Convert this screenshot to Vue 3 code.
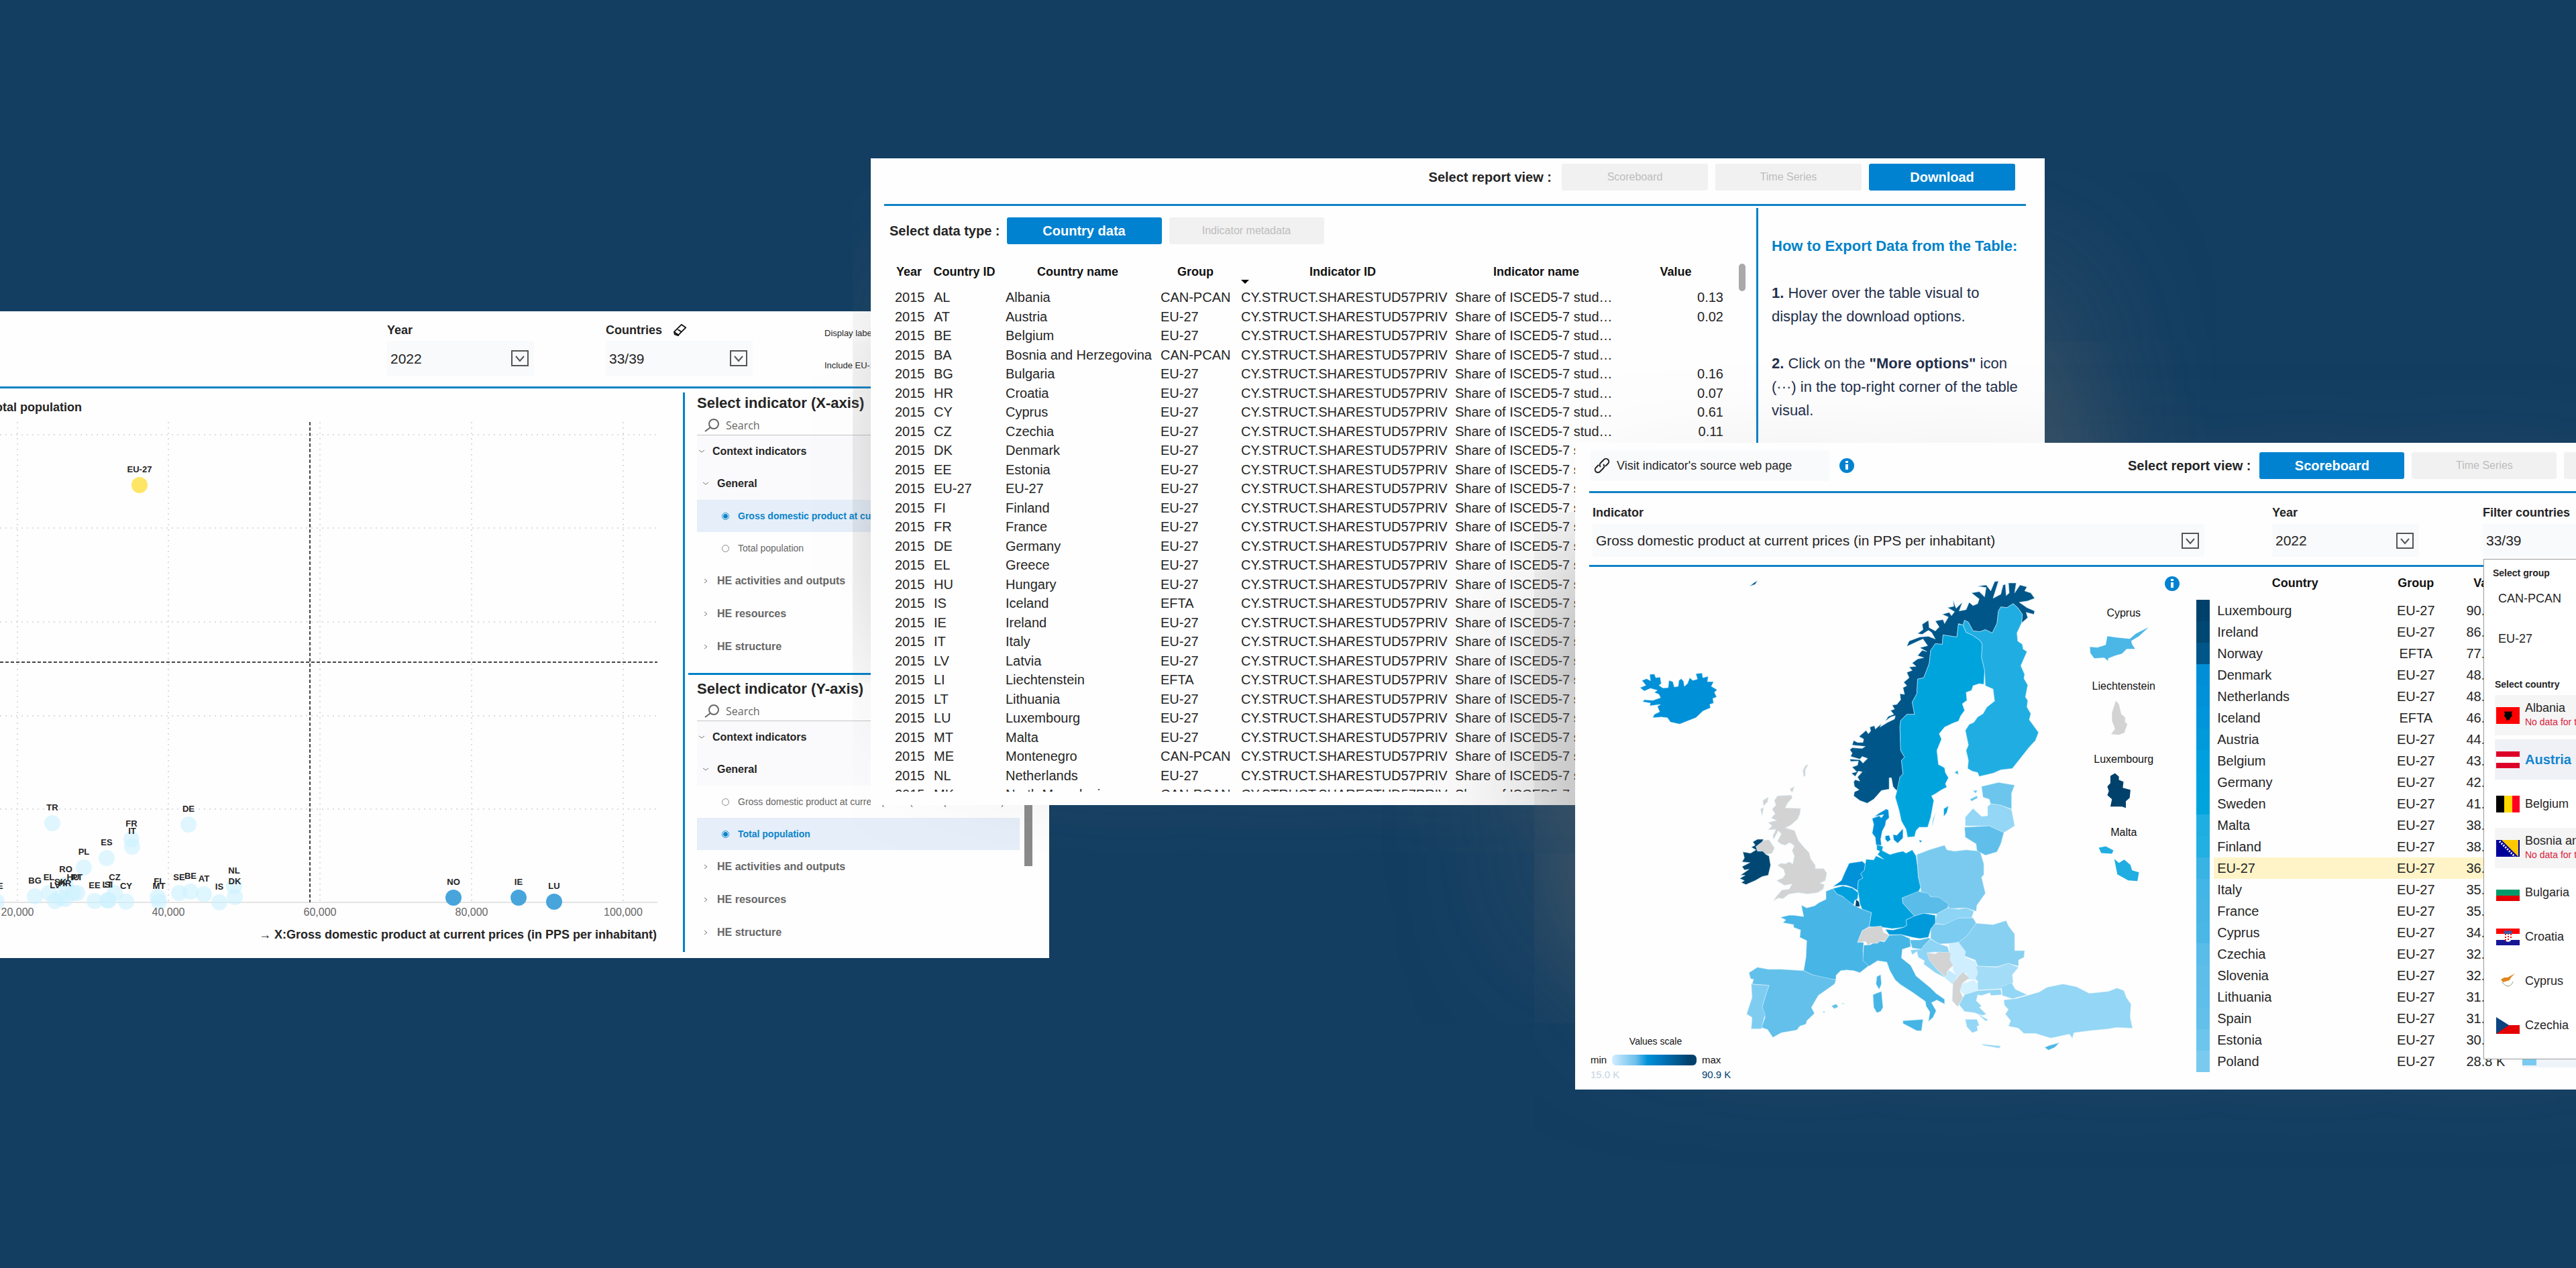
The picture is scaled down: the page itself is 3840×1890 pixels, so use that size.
<script setup>
const stud = 'CY.STRUCT.SHARESTUD57PRIV'
const countryData = [
  ['AL', 'Albania', 'CAN-PCAN', '0.13'],
  ['AT', 'Austria', 'EU-27', '0.02'],
  ['BE', 'Belgium', 'EU-27', ''],
  ['BA', 'Bosnia and Herzegovina', 'CAN-PCAN', ''],
  ['BG', 'Bulgaria', 'EU-27', '0.16'],
  ['HR', 'Croatia', 'EU-27', '0.07'],
  ['CY', 'Cyprus', 'EU-27', '0.61'],
  ['CZ', 'Czechia', 'EU-27', '0.11'],
  ['DK', 'Denmark', 'EU-27', ''],
  ['EE', 'Estonia', 'EU-27', ''],
  ['EU-27', 'EU-27', 'EU-27', ''],
  ['FI', 'Finland', 'EU-27', ''],
  ['FR', 'France', 'EU-27', ''],
  ['DE', 'Germany', 'EU-27', ''],
  ['EL', 'Greece', 'EU-27', ''],
  ['HU', 'Hungary', 'EU-27', ''],
  ['IS', 'Iceland', 'EFTA', ''],
  ['IE', 'Ireland', 'EU-27', ''],
  ['IT', 'Italy', 'EU-27', ''],
  ['LV', 'Latvia', 'EU-27', ''],
  ['LI', 'Liechtenstein', 'EFTA', ''],
  ['LT', 'Lithuania', 'EU-27', ''],
  ['LU', 'Luxembourg', 'EU-27', ''],
  ['MT', 'Malta', 'EU-27', ''],
  ['ME', 'Montenegro', 'CAN-PCAN', ''],
  ['NL', 'Netherlands', 'EU-27', ''],
  ['MK', 'North Macedonia', 'CAN-PCAN', ''],
]

const ranking = [
  ['Luxembourg', 'EU-27', 90.9, '#00416b'],
  ['Ireland', 'EU-27', 86.1, '#004873'],
  ['Norway', 'EFTA', 77.5, '#005689'],
  ['Denmark', 'EU-27', 48.6, '#008fd7'],
  ['Netherlands', 'EU-27', 48.4, '#0091d8'],
  ['Iceland', 'EFTA', 46.4, '#0095da'],
  ['Austria', 'EU-27', 44.4, '#009adb'],
  ['Belgium', 'EU-27', 43.1, '#009fdd'],
  ['Germany', 'EU-27', 42.3, '#00a2dd'],
  ['Sweden', 'EU-27', 41.5, '#00a4dd'],
  ['Malta', 'EU-27', 38.6, '#1faee2'],
  ['Finland', 'EU-27', 38.4, '#22afe2'],
  ['EU-27', 'EU-27', 36.0, '#39b2e4'],
  ['Italy', 'EU-27', 35.6, '#43b5e6'],
  ['France', 'EU-27', 35.5, '#47b5e6'],
  ['Cyprus', 'EU-27', 34.4, '#4bb7e7'],
  ['Czechia', 'EU-27', 32.7, '#5abce9'],
  ['Slovenia', 'EU-27', 32.1, '#5ebee9'],
  ['Lithuania', 'EU-27', 31.9, '#60bfea'],
  ['Spain', 'EU-27', 31.1, '#63c0ea'],
  ['Estonia', 'EU-27', 30.2, '#6cc5ec'],
  ['Poland', 'EU-27', 28.8, '#7acaef'],
]

const flagItems = [
  { name: 'Albania', key: 'al', noData: true },
  { name: 'Austria', key: 'at', active: true },
  { name: 'Belgium', key: 'be' },
  { name: 'Bosnia and Herzegovina', key: 'ba', noData: true },
  { name: 'Bulgaria', key: 'bg' },
  { name: 'Croatia', key: 'hr' },
  { name: 'Cyprus', key: 'cy' },
  { name: 'Czechia', key: 'cz' },
]

const bubbles = [
  ['TR', 78, 1227], ['DE', 281, 1229], ['FR', 196, 1251], ['IT', 197, 1262],
  ['ES', 159, 1279], ['PL', 125, 1293], ['RO', 98, 1319], ['EL', 73, 1331],
  ['BG', 52, 1336], ['LV', 82, 1343], ['SK', 90, 1338], ['HR', 97, 1340],
  ['HU', 109, 1331], ['PT', 115, 1331], ['EE', 141, 1343], ['LT', 160, 1342],
  ['SI', 162, 1342], ['CZ', 171, 1331], ['CY', 188, 1344], ['FI', 235, 1337],
  ['MT', 237, 1344], ['SE', 267, 1331], ['BE', 284, 1329], ['AT', 304, 1333],
  ['IS', 327, 1345], ['NL', 349, 1321], ['DK', 350, 1337], ['ME', -5, 1344],
  ['NO', 676, 1338, '#48a5dc'], ['IE', 773, 1338, '#48a5dc'], ['LU', 826, 1344, '#48a5dc'],
  ['EU-27', 208, 723, '#ffe566'],
]
const xTicks = [[26, '20,000'], [251, '40,000'], [477, '60,000'], [703, '80,000'], [929, '100,000']]
const yTicks = [648, 787, 927, 1067, 1206]

const axes = [
  { id: 'x', title: 'Select indicator (X-axis)', picked: 0 },
  { id: 'y', title: 'Select indicator (Y-axis)', picked: 1 },
]
const options = ['Gross domestic product at current prices (in PPS per inhabitant)', 'Total population']
const closedGroups = ['HE activities and outputs', 'HE resources', 'HE structure']

const countries = [
  ['#0090d8', 'M113 352 128 345 118 330 130 325 140 331 138 312 150 311 154 322 165 320 168 340 162 345 172 353 186 352 188 330 198 334 202 350 212 348 214 330 220 325 226 333 228 348 236 340 242 322 250 330 262 326 258 310 274 308 276 322 290 318 288 334 304 334 298 348 313 358 306 366 312 380 302 384 304 398 294 402 296 412 276 422 258 442 240 450 216 461 192 455 184 442 168 440 146 442 150 432 164 424 158 408 166 402 138 406 140 398 120 394 124 388 146 390 166 382 162 372 150 366 158 360 140 354 124 362Z'],
  ['#005689', 'M703 698 684 690 668 676 670 664 682 658 670 648 668 634 672 628 684 632 678 620 690 604 680 602 672 618 662 608 676 604 664 590 678 584 680 572 660 573 658 566 684 568 692 578 704 564 690 558 684 566 660 558 664 548 658 538 664 532 690 534 698 528 680 526 664 524 668 510 678 516 692 516 694 506 682 498 700 480 706 490 712 482 710 470 722 466 724 476 740 460 736 470 756 456 774 446 776 436 764 440 750 452 758 438 772 432 764 420 774 416 768 404 780 402 790 388 788 370 800 372 796 352 806 346 798 336 812 322 806 306 820 300 812 290 830 288 820 278 834 266 850 262 834 256 846 240 858 244 840 232 860 226 848 206 832 214 806 228 812 212 840 200 862 198 880 206 870 186 862 180 846 192 834 190 848 178 846 162 862 150 864 172 880 182 890 170 880 152 900 148 904 160 914 140 898 132 916 126 922 136 930 124 912 112 928 108 926 90 934 114 950 96 942 122 960 118 968 96 978 106 990 100 994 86 974 68 994 64 1008 80 1012 52 990 48 1012 44 1024 62 1034 34 1044 32 1030 84 1050 72 1056 44 1062 42 1064 76 1072 68 1070 38 1090 38 1086 68 1100 44 1118 50 1112 62 1128 68 1138 84 1120 92 1098 96 1118 112 1138 122 1136 132 1116 126 1120 142 1104 158 1106 132 1094 112 1082 100 1066 112 1050 110 1044 122 1040 160 1028 188 1010 178 996 184 978 182 966 156 956 150 952 164 940 160 936 200 900 194 898 222 880 220 868 240 864 280 850 322 834 326 832 370 820 395 826 432 806 432 790 450 788 470 790 540 800 560 792 570 796 610 788 620 782 662 776 656 770 648 766 622 760 622 760 656 740 660 720 686ZM398 48 408 38 418 31 412 42 402 46Z'],
  ['#00a4dd', 'M940 162 952 164 960 186 976 194 996 210 1002 222 1000 260 1008 300 1006 342 994 340 978 346 974 360 960 366 962 390 950 400 956 420 946 436 940 452 926 458 904 470 890 490 896 506 884 540 888 582 904 592 906 606 914 622 906 640 910 650 896 658 880 670 870 676 876 690 868 740 860 770 838 770 830 780 826 798 808 800 804 776 792 752 786 720 776 680 780 662 788 620 796 610 792 570 800 560 790 540 788 470 790 450 806 432 826 432 820 395 832 370 834 326 850 322 864 280 868 240 880 220 898 222 900 194 936 200ZM902 715 914 706 910 726 902 738ZM880 728 872 766 874 748Z'],
  ['#20aee2', 'M952 164 956 150 966 156 978 182 996 184 1010 178 1028 188 1040 160 1044 122 1050 110 1066 112 1082 100 1094 112 1106 132 1104 158 1092 188 1094 212 1106 222 1108 236 1118 244 1102 286 1112 312 1110 324 1120 344 1114 380 1120 390 1118 410 1128 430 1124 448 1148 486 1140 510 1124 530 1080 594 1050 598 1030 608 994 618 990 606 976 602 964 594 966 570 960 540 966 524 958 480 968 462 980 456 990 440 1004 430 1014 410 1034 392 1030 356 1010 346 1008 300 1000 260 1002 222 996 210 976 194 960 186ZM930 606 938 600 940 612Z'],
  ['#0090d8', 'M734 728 752 716 758 718 760 742 752 750 750 764 742 782 738 806 740 824 726 824 724 800 716 788 720 762 716 744 734 736 740 742 746 732 722 738ZM750 796 760 794 764 808 756 814 750 806ZM770 792 780 794 796 774 796 802 782 818 772 808ZM838 808 846 812 840 816Z'],
  ['#d3d3d3', 'M470 676 506 674 508 682 496 698 490 712 530 714 528 730 522 746 504 764 490 772 514 780 524 810 540 832 552 846 556 864 568 884 568 894 590 894 598 908 594 930 580 938 592 942 588 956 574 966 548 970 524 966 500 970 484 984 472 982 460 990 468 976 482 958 500 956 508 940 488 944 468 930 484 922 490 912 486 896 470 884 480 878 490 880 500 874 510 880 514 856 508 840 514 826 502 816 490 824 478 820 470 812 480 790 472 780 460 806 458 796 466 776 446 778 456 766 446 756 468 750 454 742 464 730 456 716 466 704 462 690ZM432 690 446 680 444 694 434 706ZM426 716 434 710 430 736ZM536 600 542 586 550 582 542 598 542 616 538 618ZM502 656 514 648 508 666ZM414 826 432 810 448 808 462 832 456 848 440 852 432 842 418 842Z'],
  ['#004873', 'M434 806 430 814 414 828 418 842 432 842 440 852 448 856 452 884 446 914 430 918 412 930 388 942 376 936 384 930 372 924 386 914 374 914 396 896 384 898 378 888 398 876 378 874 384 862 380 844 400 848 414 838 402 830 412 824 406 814 418 806Z'],
  ['#0091d8', 'M656 878 690 872 698 880 696 898 686 910 692 922 680 930 678 960 664 950 648 944 632 944 614 948 636 930 644 908Z'],
  ['#009fdd', 'M614 954 640 946 664 952 680 966 678 984 670 990 668 1004 650 990 640 978 624 970Z'],
  ['#00a2dd', 'M728 822 744 828 742 840 762 852 780 846 796 842 804 848 820 838 830 856 834 890 836 920 842 950 836 964 794 982 796 998 826 1036 804 1048 806 1064 798 1070 768 1074 744 1070 708 1068 714 1026 690 1016 684 1000 680 966 678 960 680 930 692 922 686 910 696 898 698 880 700 866 720 868 726 856 746 866 730 852 736 842 728 838Z'],
  ['#00416b', 'M674 986 682 994 684 1008 672 1008Z'],
  ['#7acaef', 'M832 852 864 838 904 824 910 838 930 842 960 838 996 842 1006 880 1006 912 1000 920 1010 968 988 1004 986 1022 960 1012 918 1014 900 996 860 972 842 962 842 950 836 920Z'],
  ['#5abce9', 'M794 982 836 962 860 968 868 978 890 980 914 1000 912 1012 884 1030 850 1028 826 1036 796 998Z'],
  ['#8dd4f5', 'M884 1030 912 1012 940 1016 960 1012 980 1022 974 1042 940 1042 920 1056 904 1062 878 1058Z'],
  ['#009adb', 'M750 1076 770 1078 798 1070 806 1064 804 1048 826 1036 850 1028 880 1034 880 1058 868 1076 862 1100 840 1104 820 1100 792 1092 760 1092Z'],
  ['#7ccbf0', 'M878 1060 904 1062 940 1042 978 1042 986 1058 962 1096 940 1116 920 1118 890 1120 868 1104 868 1076Z'],
  ['#47b5e6', 'M596 962 614 954 624 970 640 978 668 1004 690 1016 714 1026 708 1068 690 1080 678 1114 694 1116 692 1140 694 1170 708 1184 684 1206 668 1200 650 1198 634 1200 622 1214 622 1226 600 1228 560 1212 538 1200 544 1160 546 1110 528 1100 530 1078 512 1070 512 1062 484 1056 492 1048 478 1040 500 1034 512 1034 538 1038 532 1004 546 1012 566 1006 578 996 596 986ZM728 1218 738 1212 740 1240 734 1256 726 1240Z'],
  ['#63c0ea', 'M396 1206 418 1190 446 1196 480 1196 538 1200 560 1212 622 1228 618 1240 576 1274 558 1310 566 1328 546 1350 544 1360 528 1366 520 1378 480 1386 458 1400 444 1376 428 1370 438 1340 430 1310 440 1270 448 1244 404 1240 408 1226 400 1224ZM610 1306 622 1300 628 1308 618 1314ZM636 1298 644 1298 640 1300ZM588 1324 592 1320 592 1326Z'],
  ['#7fccf1', 'M402 1240 416 1242 448 1244 440 1270 430 1310 438 1330 428 1374 402 1374 404 1340 390 1330 404 1280Z'],
  ['#45b5e6', 'M694 1124 712 1122 730 1110 748 1114 760 1094 792 1092 814 1104 816 1128 794 1136 792 1162 816 1184 830 1216 868 1252 882 1268 904 1286 904 1300 884 1288 870 1296 882 1320 874 1340 862 1352 866 1324 856 1306 854 1292 820 1264 790 1242 776 1228 762 1200 754 1174 730 1170 708 1186 692 1170ZM796 1350 848 1346 844 1380 832 1380 796 1358ZM718 1272 740 1262 744 1310 738 1322 728 1326 720 1310Z'],
  ['#d3d3d3', 'M690 1080 708 1070 740 1066 746 1086 760 1094 748 1112 738 1110 730 1118 712 1118 706 1124 698 1112 678 1116Z'],
  ['#5ebee9', 'M814 1108 840 1108 862 1102 868 1104 850 1126 844 1136 820 1132Z'],
  ['#8dd4f5', 'M816 1138 844 1136 852 1122 868 1106 890 1120 912 1128 916 1146 880 1144 860 1146 866 1170 884 1196 908 1222 880 1206 850 1180 852 1170 836 1160 832 1142 820 1152Z'],
  ['#87d0f1', 'M962 1096 986 1058 1030 1062 1064 1050 1070 1066 1086 1090 1086 1140 1112 1140 1110 1160 1096 1168 1096 1186 1070 1178 1040 1188 990 1186 984 1168 956 1156 958 1142 940 1116Z'],
  ['#cfeeff', 'M916 1120 940 1114 958 1144 956 1160 984 1172 990 1200 984 1226 966 1226 960 1206 940 1220 926 1200 926 1184 918 1168Z'],
  ['#d3d3d3', 'M858 1146 880 1150 888 1144 920 1146 918 1168 926 1184 912 1200 908 1220 884 1196 864 1168Z'],
  ['#c4eafd', 'M914 1198 938 1216 924 1240 906 1222Z'],
  ['#a3dcf7', 'M986 1186 1040 1190 1070 1178 1096 1190 1080 1212 1082 1236 1050 1254 990 1258 990 1230 984 1226 990 1206Z'],
  ['#d4f1ff', 'M950 1240 980 1228 990 1240 988 1260 956 1272 946 1262Z'],
  ['#93d6f5', 'M942 1302 956 1272 990 1260 1050 1256 1052 1272 1024 1274 1022 1266 1000 1274 990 1272 986 1290 1000 1306 994 1310 1012 1330 1002 1334 982 1326 956 1322ZM958 1346 988 1346 994 1364 988 1366 990 1380 976 1386 962 1368ZM990 1330 1018 1348 1010 1350ZM1000 1420 1050 1426 1046 1432 1006 1424Z'],
  ['#d3d3d3', 'M940 1218 952 1204 968 1222 950 1238 944 1262 952 1280 938 1308 924 1290 926 1236Z'],
  ['#93d6f5', 'M1052 1248 1078 1236 1088 1256 1118 1272 1080 1284 1054 1274ZM1058 1288 1090 1284 1120 1274 1150 1264 1170 1250 1212 1240 1246 1248 1280 1268 1330 1262 1352 1252 1370 1260 1376 1280 1388 1300 1386 1340 1392 1372 1350 1370 1330 1374 1280 1380 1240 1386 1236 1402 1228 1390 1180 1402 1140 1388 1110 1388 1096 1372 1070 1366 1076 1350 1062 1330 1070 1316 1060 1304Z'],
  ['#4bb7e7', 'M1164 1430 1176 1424 1202 1416 1190 1430 1174 1438Z'],
  ['#6cc5ec', 'M1000 648 1044 636 1086 644 1078 668 1078 716 1050 704 1024 700 1020 686 1004 680ZM970 686 988 676 990 682 974 692ZM978 660 990 660 984 668Z'],
  ['#93d6f5', 'M958 740 978 714 1000 738 1016 736 1016 708 1024 700 1050 704 1078 718 1086 766 1058 786 1020 766 958 766Z'],
  ['#60bfea', 'M956 770 1020 766 1058 786 1050 820 1040 844 1010 854 988 840 986 820 958 800Z'],
]

const insets = [
  ['Cyprus', 147, '#4bb7e7', 'M1281 230 1300 232 1322 224 1326 198 1350 202 1384 206 1400 190 1433 171 1408 198 1388 212 1390 222 1398 236 1376 236 1364 250 1346 256 1328 264 1328 272 1318 262 1292 264 1282 248Z'],
  ['Liechtenstein', 365, '#d3d3d3', 'M1348 390 1356 400 1362 430 1372 440 1372 454 1378 460 1370 486 1356 492 1336 490 1346 474 1338 450 1338 426Z'],
  ['Luxembourg', 583, '#00416b', 'M1346 606 1356 616 1356 626 1368 632 1366 650 1386 656 1384 680 1374 690 1374 710 1364 706 1334 706 1338 684 1326 672 1330 660 1326 646 1334 636 1334 614Z'],
  ['Malta', 801, '#20aee2', 'M1304 828 1322 824 1342 836 1338 846 1310 844ZM1344 862 1356 874 1370 864 1386 880 1390 896 1408 902 1404 928 1380 926 1352 908Z'],
]
</script>

<template>
  <main class="stage">
    <section class="window scatter">
      <div class="sheet">
        <header class="scatter-head">
          <div class="field">
            <label class="field-label" for="s-year">Year</label>
            <span class="picker tall">
              <select id="s-year"><option>2022</option></select>
              <svg class="chev" viewBox="0 0 26 24"><path d="M1 1h24v22H1zM7 9l6 7 6-7" /></svg>
            </span>
          </div>
          <div class="field">
            <div class="label-row">
              <label class="field-label" for="s-countries">Countries</label>
              <button class="icon-button" aria-label="Clear selection">
                <svg viewBox="0 0 22 22" width="20" height="22"><path d="M1 14 13 2l7 5L8 19zM1 14l1 4 6 2v-1M6 9l7 5" /></svg>
              </button>
            </div>
            <span class="picker tall">
              <select id="s-countries"><option>33/39</option></select>
              <svg class="chev" viewBox="0 0 26 24"><path d="M1 1h24v22H1zM7 9l6 7 6-7" /></svg>
            </span>
          </div>
          <div class="toggles">
            <label>Display labels <input type="checkbox" checked /></label>
            <label>Include EU-27 <input type="checkbox" checked /></label>
          </div>
        </header>
        <div class="scatter-body">
          <svg class="plot" viewBox="-186 579 1204 840">
            <text class="axis-title" x="122" y="613" text-anchor="end">↑ Y:Total population</text>
            <g class="grid-lines">
              <line v-for="t in xTicks" :key="t[0]" :x1="t[0]" :x2="t[0]" y1="629" y2="1345" stroke-dasharray="2 6" />
              <line v-for="y in yTicks" :key="y" x1="-120" x2="978" :y1="y" :y2="y" stroke-dasharray="2 6" />
            </g>
            <path class="axis" d="M-120 1345H980" />
            <path class="median" d="M462 629V1345M-120 987H980" />
            <circle v-for="b in bubbles" :key="b[0]" :cx="b[1]" :cy="b[2]" r="12" :fill="b[3] || '#cbf1ff'" :fill-opacity="b[3] ? 1 : 0.62" />
            <text v-for="b in bubbles" :key="b[0]" class="tag" :x="b[1]" :y="b[2] - 19" text-anchor="middle">{{ b[0] }}</text>
            <text v-for="t in xTicks" :key="t[1]" class="tick" :x="t[0]" y="1365" text-anchor="middle">{{ t[1] }}</text>
            <text class="axis-title" x="979" y="1399" text-anchor="end">→ X:Gross domestic product at current prices (in PPS per inhabitant)</text>
          </svg>
          <aside class="indicators">
            <div v-for="a in axes" :key="a.id" class="axis-block">
              <h2>{{ a.title }}</h2>
              <label class="search">
                <svg viewBox="0 0 22 20" width="22" height="20"><circle cx="14" cy="8" r="7" /><path d="M9 13 1 19" /></svg>
                <input type="text" placeholder="Search" :aria-label="'Search ' + a.title" />
              </label>
              <div class="tree-wrap">
                <div class="tree">
                  <button class="node root"><svg viewBox="0 0 10 10"><path d="m1 3 4 3 4-3" /></svg>Context indicators</button>
                  <button class="node child"><svg viewBox="0 0 10 10"><path d="m1 3 4 3 4-3" /></svg>General</button>
                  <label v-for="(o, i) in options" :key="o" class="option" :class="{ picked: i === a.picked }">
                    <input type="radio" :name="'axis-' + a.id" :checked="i === a.picked" /><span>{{ o }}</span>
                  </label>
                  <button v-for="g in closedGroups" :key="g" class="node closed"><svg viewBox="0 0 10 10"><path d="m3 2 4 3-4 3" /></svg>{{ g }}</button>
                </div>
                <span class="tree-bar"></span>
              </div>
            </div>
          </aside>
        </div>
      </div>
    </section>

    <section class="window export">
      <div class="glow"></div>
      <div class="sheet">
        <header class="export-head">
          <span class="prompt">Select report view :</span>
          <nav class="tabs">
            <button class="tab">Scoreboard</button>
            <button class="tab">Time Series</button>
            <button class="tab on">Download</button>
          </nav>
        </header>
        <div class="export-body">
          <div class="export-main">
            <div class="type-row">
              <span class="prompt">Select data type :</span>
              <nav class="tabs wide">
                <button class="tab on">Country data</button>
                <button class="tab">Indicator metadata</button>
              </nav>
            </div>
            <div class="data-area">
              <div class="data-scroll">
                <table class="data">
                  <colgroup>
                    <col class="c-year" /><col class="c-id" /><col class="c-name" /><col class="c-group" /><col class="c-ind" /><col class="c-label" /><col class="c-value" />
                  </colgroup>
                  <thead>
                    <tr>
                      <th>Year</th><th>Country ID</th><th>Country name</th><th>Group</th>
                      <th class="sorted">Indicator ID</th><th>Indicator name</th><th class="val-head">Value</th>
                    </tr>
                  </thead>
                  <tbody>
                    <tr v-for="r in countryData" :key="r[0]">
                      <td>2015</td><td>{{ r[0] }}</td><td>{{ r[1] }}</td><td>{{ r[2] }}</td>
                      <td>{{ stud }}</td><td>Share of ISCED5-7 stud…</td><td class="num">{{ r[3] }}</td>
                    </tr>
                  </tbody>
                </table>
              </div>
              <span class="thumb"></span>
            </div>
          </div>
          <aside class="howto">
            <h2>How to Export Data from the Table:</h2>
            <p><b>1.</b> Hover over the table visual to display the download options.</p>
            <p><b>2.</b> Click on the <b>"More options"</b> icon (···) in the top-right corner of the table visual.</p>
          </aside>
        </div>
      </div>
    </section>

    <section class="window board">
      <div class="glow"></div>
      <div class="sheet">
        <header class="board-head">
          <a class="source" href="#">
            <svg viewBox="0 0 24 24" width="24" height="24"><path d="M10 14a4 4 0 0 1 0-6l5-5a4 4 0 0 1 6 6l-4 4M14 10a4 4 0 0 1 0 6l-5 5a4 4 0 0 1-6-6l4-4" /></svg>
            Visit indicator's source web page
          </a>
          <svg class="info" viewBox="0 0 22 22"><circle cx="11" cy="11" r="11" /><path d="M9 9h4v8H9zM9 4h4v3H9z" /></svg>
          <span class="prompt">Select report view :</span>
          <nav class="tabs">
            <button class="tab on">Scoreboard</button>
            <button class="tab">Time Series</button>
            <button class="tab">Download</button>
          </nav>
        </header>
        <div class="filters">
          <div class="field f-indicator">
            <label class="field-label" for="b-ind">Indicator</label>
            <span class="picker">
              <select id="b-ind"><option>Gross domestic product at current prices (in PPS per inhabitant)</option></select>
              <svg class="chev" viewBox="0 0 26 24"><path d="M1 1h24v22H1zM7 9l6 7 6-7" /></svg>
            </span>
          </div>
          <div class="field">
            <label class="field-label" for="b-year">Year</label>
            <span class="picker">
              <select id="b-year"><option>2022</option></select>
              <svg class="chev" viewBox="0 0 26 24"><path d="M1 1h24v22H1zM7 9l6 7 6-7" /></svg>
            </span>
          </div>
          <div class="field">
            <label class="field-label" for="b-countries">Filter countries</label>
            <span class="picker">
              <select id="b-countries"><option>33/39</option></select>
              <svg class="chev" viewBox="0 0 26 24"><path d="M1 1h24v22H1zM7 9l6 7 6-7" /></svg>
            </span>
            <div class="menu">
              <h3>Select group</h3>
              <button class="group-item">CAN-PCAN</button>
              <button class="group-item">EU-27</button>
              <h3 class="second">Select country</h3>
              <div class="menu-list">
                <button v-for="f in flagItems" :key="f.key" class="flag-item" :class="{ active: f.active, off: f.noData }">
                  <svg class="flag" viewBox="0 0 35 25">
                    <template v-if="f.key === 'al'"><path fill="#f00" d="M0 0h35v25H0z" /><path d="m12 6 3 1 2-1 1 2 1-2 2 1 3-1-1 4 1 3-3 3-2 4-1-2-2 3-1-4-3-4 1-3z" /></template>
                    <template v-else-if="f.key === 'at'"><path fill="#dd0028" d="M0 0h35v25H0z" /><path fill="#fff" d="M0 8h35v9H0z" /></template>
                    <template v-else-if="f.key === 'be'"><path d="M0 0h12v25H0z" /><path fill="#ffd800" d="M12 0h12v25H12z" /><path fill="#ff0022" d="M24 0h11v25H24z" /></template>
                    <template v-else-if="f.key === 'ba'"><path fill="#000099" d="M0 0h35v25H0z" /><path fill="#ffc800" d="M8 0h25v25z" /><path class="stars" d="M5 2 28 25" /></template>
                    <template v-else-if="f.key === 'bg'"><path fill="#009b6b" d="M0 8h35v9H0z" /><path fill="#e40000" d="M0 17h35v8H0z" /></template>
                    <template v-else-if="f.key === 'hr'"><path fill="#f00" d="M0 0h35v8H0z" /><path fill="#171796" d="M0 17h35v8H0z" /><path fill="#fff" d="M12 6h11v8q0 5-5 6-6-1-6-6z" /><path class="checks" d="M14 8v10M18 7v12M22 8v8" /><path fill="#3a5aa8" d="m11 4 3-1 3 1 3-1 4 1-1 4H12z" /></template>
                    <template v-else-if="f.key === 'cy'"><path fill="#e08520" d="m7 10 5-3h5l11-6-6 6-2 4-6 2-4 1z" /><path class="olive" d="M9 14q4 6 9 6 5-1 7-7" /></template>
                    <template v-else><path fill="#e40000" d="M0 12h35v13H0z" /><path fill="#0b4480" d="m0 0 19 12L0 25z" /></template>
                  </svg>
                  <span class="flag-text"><span>{{ f.name }}</span><small v-if="f.noData">No data for this indicator</small></span>
                </button>
              </div>
            </div>
          </div>
        </div>
        <div class="board-body">
          <div class="map-area">
            <svg class="map" viewBox="0 0 1551 1520" preserveAspectRatio="none">
              <path v-for="(c, i) in countries" :key="i" :fill="c[0]" :d="c[1]" />
            </svg>
            <svg class="info map-info" viewBox="0 0 22 22"><circle cx="11" cy="11" r="11" /><path d="M9 9h4v8H9zM9 4h4v3H9z" /></svg>
            <div class="insets">
              <figure v-for="n in insets" :key="n[0]">
                <figcaption>{{ n[0] }}</figcaption>
                <svg :viewBox="`1268 ${n[1]} 200 183`" preserveAspectRatio="none"><path :fill="n[2]" :d="n[3]" /></svg>
              </figure>
            </div>
            <div class="legend">
              <span class="l-title">Values scale</span>
              <span class="l-min">min</span><span class="l-bar"></span><span class="l-max">max</span>
              <span class="l-low">15.0 K</span><span class="l-high">90.9 K</span>
            </div>
          </div>
          <table class="rank">
            <colgroup><col class="r-strip" /><col class="r-name" /><col class="r-group" /><col class="r-value" /><col /></colgroup>
            <thead>
              <tr><th></th><th>Country</th><th>Group</th><th class="val">Value</th><th></th></tr>
            </thead>
            <tbody>
              <tr v-for="r in ranking" :key="r[0]" :class="{ eu: r[0] === 'EU-27' }">
                <td class="strip" :style="{ background: r[3] }"></td>
                <td class="name">{{ r[0] }}</td>
                <td class="grp">{{ r[1] }}</td>
                <td class="val">{{ r[2].toFixed(1) }} K</td>
                <td class="bar-cell"><div class="track"><div class="fill" :style="{ width: Math.round((r[2] - 15) * 1.5) + 'px', background: r[3] }"></div></div></td>
              </tr>
            </tbody>
          </table>
        </div>
      </div>
    </section>
  </main>
</template>

<style>
body {
  margin: 0;
  background: #133e62;
}
</style>

<style scoped>
* {
  box-sizing: border-box;
}
.stage {
  position: relative;
  min-height: 100vh;
  overflow: hidden;
  background: #133e62;
  color: #252525;
  font-family: "Liberation Sans", Arial, sans-serif;
  font-size: 20px;
}
h2,
h3,
p,
figure {
  margin: 0;
}
button,
select,
input {
  font-family: inherit;
  color: inherit;
}
button {
  border: 0;
  padding: 0;
  background: none;
}

/* Overlapping windows */
.window {
  position: absolute;
}
.scatter {
  left: -4.844%;
  right: 59.271%;
  top: 464px;
}
.export {
  left: 33.802%;
  right: 20.625%;
  top: 236px;
}
.board {
  left: 61.146%;
  right: -6.719%;
  top: 660px;
}
.sheet {
  position: relative;
  background: #fefefe;
}
.glow {
  position: absolute;
  inset: 170px 0;
  border-radius: 160px;
  box-shadow: 0 0 240px #6b6b6b;
}
.export .glow {
  left: 100px;
}

/* Shared controls */
.prompt {
  font-weight: bold;
  white-space: nowrap;
}
.tabs {
  display: flex;
  gap: 11px;
}
.tab {
  width: 218px;
  height: 40px;
  border-radius: 3px;
  background: #f1f1f1;
  color: #bdbdbd;
  font-size: 16px;
}
.wide .tab {
  width: 231px;
}
.board .tab {
  width: 216px;
}
.tab.on {
  background: #0082d1;
  color: #fff;
  font-size: 20px;
  font-weight: bold;
}
.field {
  position: relative;
  display: flex;
  flex-direction: column;
  width: 219px;
}
.field-label {
  font-size: 18px;
  line-height: 18px;
  font-weight: bold;
}
.label-row {
  display: flex;
  align-items: center;
  gap: 17px;
  height: 18px;
}
.icon-button {
  height: 22px;
}
.icon-button svg {
  display: block;
  fill: none;
  stroke: #111;
  stroke-width: 2;
  stroke-linejoin: round;
}
.picker {
  display: grid;
  align-items: center;
  margin-top: 8px;
}
.picker select {
  grid-area: 1 / 1;
  width: 100%;
  height: 49px;
  padding: 0 44px 0 5px;
  border: 0;
  border-radius: 0;
  background: #f9fafc;
  appearance: none;
  font-size: 21px;
}
.picker.tall {
  margin-top: 7px;
}
.picker.tall select {
  height: 52px;
}
.chev {
  grid-area: 1 / 1;
  justify-self: end;
  width: 26px;
  height: 24px;
  margin-right: 8px;
  fill: none;
  stroke: #555;
  stroke-width: 2;
  pointer-events: none;
}

/* Scatter window */
.scatter .sheet {
  padding-bottom: 9px;
}
.scatter-head {
  display: flex;
  justify-content: flex-end;
  gap: 107px;
  padding: 19px 19px 16px 0;
  border-bottom: 3px solid #0f82c4;
}
.toggles {
  display: flex;
  flex-direction: column;
  gap: 30px;
  width: 316px;
  padding-top: 5px;
  font-size: 13px;
  line-height: 18px;
}
.toggles label {
  display: flex;
  justify-content: space-between;
  height: 18px;
}
.scatter-body {
  display: grid;
  grid-template-columns: 1fr 546px;
}
.plot {
  display: block;
  width: 100%;
}
.grid-lines {
  stroke: #dcdcdc;
  stroke-width: 2;
}
.axis {
  stroke: #c8c8c8;
  stroke-width: 1;
}
.median {
  fill: none;
  stroke: #444;
  stroke-width: 2;
  stroke-dasharray: 5 3;
}
.axis-title {
  font-size: 18px;
  font-weight: bold;
  fill: #252525;
}
.tick {
  font-size: 16px;
  fill: #666;
}
.tag {
  font-size: 13px;
  font-weight: bold;
  fill: #252525;
}
.indicators {
  margin-top: 6px;
  border-left: 3px solid #0082c8;
}
.axis-block {
  padding: 3px 25px 0 18px;
}
.axis-block + .axis-block {
  margin: 15px 18px 0 5px;
  padding: 8px 7px 0 13px;
  border-top: 3px solid #0082c8;
}
.axis-block h2 {
  font-size: 22px;
  line-height: 26px;
}
.search {
  display: flex;
  align-items: center;
  gap: 10px;
  height: 35px;
  margin-right: 19px;
  padding: 5px 0 0 11px;
  border-bottom: 1px solid #c4c4c4;
}
.search svg {
  fill: none;
  stroke: #666;
  stroke-width: 2;
}
.search input {
  flex: 1;
  min-width: 0;
  height: 24px;
  padding: 0;
  border: 0;
  background: none;
  font-family: "Open Sans", sans-serif;
  font-size: 16px;
}
.search input::placeholder {
  color: #666;
}
.tree-wrap {
  display: flex;
  gap: 7px;
}
.tree {
  display: flex;
  flex: 1;
  flex-direction: column;
  min-width: 0;
}
.tree-bar {
  width: 12px;
  height: 216px;
  background: #8a8a8a;
}
.node {
  display: flex;
  align-items: center;
  gap: 12px;
  height: 48px;
  padding-left: 8px;
  background: #fafafc;
  font-size: 16px;
  font-weight: bold;
  text-align: left;
}
.node svg {
  width: 10px;
  height: 10px;
  fill: none;
  stroke: #777;
  stroke-width: 1;
}
.root {
  gap: 11px;
  padding-left: 2px;
}
.closed {
  height: 49px;
  background: none;
  color: #666;
}
.option {
  display: flex;
  align-items: center;
  gap: 13px;
  height: 48px;
  padding-left: 37px;
  color: #666;
  font-size: 14px;
  white-space: nowrap;
}
.option span {
  overflow: hidden;
}
.option input {
  flex: none;
  width: 11px;
  height: 11px;
  margin: 0;
  border: 1px solid #888;
  border-radius: 50%;
  appearance: none;
}
.option.picked {
  background: #e5eef9;
  color: #0b84c9;
  font-weight: bold;
}
.option.picked input {
  border-color: #0b84c9;
  background: radial-gradient(circle, #0b84c9 3px, #fff 4px);
}

/* Export window */
.export .sheet {
  padding: 0 28px 20px 20px;
}
.export-head {
  display: flex;
  justify-content: flex-end;
  align-items: center;
  gap: 15px;
  padding: 8px 16px 20px;
  border-bottom: 3px solid #0f82c4;
}
.export-body {
  display: flex;
}
.export-main {
  flex: 1;
  min-width: 0;
  padding: 17px 0 0 8px;
}
.type-row {
  display: flex;
  align-items: center;
  gap: 10px;
}
.data-area {
  display: flex;
  margin-top: 21px;
}
.data-scroll {
  max-height: 795px;
  overflow: hidden;
}
.thumb {
  width: 10px;
  height: 41px;
  margin: 8px 0 0 15px;
  border-radius: 5px;
  background: #a9a9a9;
}
.data {
  width: 1251px;
  table-layout: fixed;
  border-collapse: collapse;
  white-space: nowrap;
}
.c-year { width: 58px; }
.c-id { width: 107px; }
.c-name { width: 231px; }
.c-group { width: 120px; }
.c-ind { width: 319px; }
.c-label { width: 258px; }
.c-value { width: 158px; }
.data th {
  position: relative;
  height: 44px;
  padding: 0 0 4px;
  font-size: 18px;
  color: #111;
}
.sorted::before {
  content: "";
  position: absolute;
  left: 8px;
  bottom: 6px;
  border: 6px solid transparent;
  border-top-color: #000;
  border-bottom: 0;
}
.data td {
  height: 28px;
  padding: 0 8px;
  line-height: 24px;
}
.data tr:nth-child(even) td {
  height: 29px;
}
.data .num {
  text-align: right;
}
.howto {
  width: 402px;
  margin-top: 3px;
  padding: 39px 8px 0 20px;
  border-left: 3px solid #0082c8;
  color: #232f4b;
  font-size: 22px;
  line-height: 35px;
}
.howto h2 {
  color: #0082c8;
  font-size: 22px;
  white-space: nowrap;
}
.howto p {
  margin-top: 35px;
}

/* Scoreboard window */
.board .sheet {
  padding: 0 21px;
}
.board-head {
  display: flex;
  align-items: center;
  padding: 11px 0 15px 2px;
  border-bottom: 3px solid #0f82c4;
}
.source {
  display: flex;
  align-items: center;
  gap: 10px;
  width: 356px;
  height: 46px;
  padding-left: 5px;
  background: #f9fafc;
  color: #252525;
  font-size: 18px;
  text-decoration: none;
}
.source svg {
  fill: none;
  stroke: #222;
  stroke-width: 2;
}
.info {
  width: 22px;
  height: 22px;
  fill: #0082d1;
}
.info path {
  fill: #fff;
}
.board-head .info {
  margin-left: 15px;
}
.board-head .prompt {
  margin-left: 408px;
}
.board-head .tabs {
  margin-left: 13px;
}
.filters {
  display: flex;
  gap: 95px;
  padding: 20px 0 12px 5px;
  border-bottom: 3px solid #0f82c4;
}
.f-indicator {
  width: 912px;
  margin-right: 6px;
}
.menu {
  position: absolute;
  z-index: 2;
  left: 1px;
  top: 78px;
  width: 330px;
  padding: 12px 16px 20px;
  border: 1px solid #9a9a9a;
  background: #fff;
}
.menu h3 {
  margin-left: -3px;
  font-size: 14px;
  line-height: 16px;
}
.menu h3.second {
  margin: 30px 0 8px;
}
.group-item {
  display: block;
  width: 100%;
  height: 60px;
  padding-left: 5px;
  font-size: 18px;
  text-align: left;
}
.menu-list {
  display: flex;
  flex-direction: column;
  gap: 6px;
}
.flag-item {
  display: flex;
  align-items: center;
  gap: 8px;
  height: 60px;
  padding-left: 2px;
  font-size: 18px;
  text-align: left;
}
.flag-item.off {
  background: #f5f5f5;
}
.flag-item.active {
  background: #f0f1f6;
  color: #1285cf;
  font-size: 20px;
  font-weight: bold;
}
.flag {
  width: 35px;
  height: 25px;
}
.stars {
  stroke: #fff;
  stroke-width: 3;
  stroke-dasharray: 2 2;
}
.checks {
  stroke: #f00;
  stroke-width: 2;
  stroke-dasharray: 2 2;
}
.olive {
  fill: none;
  stroke: #8a9a7a;
  stroke-width: 1;
}
.flag-text {
  display: flex;
  flex-direction: column;
  line-height: 21px;
  white-space: nowrap;
}
.flag-text small {
  color: #d8233c;
  font-size: 14px;
}
.board-body {
  display: grid;
  grid-template-columns: 53% 47%;
  align-items: start;
}
.map-area {
  display: grid;
}
.map-area > * {
  grid-area: 1 / 1;
}
.map {
  width: 890px;
  height: 756px;
  margin: 5px 0 18px 11px;
  stroke: #d4effc;
  stroke-width: 1;
  stroke-linejoin: round;
}
.map-info {
  justify-self: end;
  margin: 14px 25px 0 0;
}
.insets {
  justify-self: end;
  align-self: start;
  margin: 60px 51px 0 0;
}
.insets figure {
  display: flex;
  flex-direction: column;
  align-items: center;
  height: 109px;
}
.insets figcaption {
  font-size: 16px;
  line-height: 18px;
  color: #111;
}
.insets svg {
  width: 115px;
  height: 91px;
}
.legend {
  display: grid;
  grid-template-columns: 32px 126px auto;
  justify-self: start;
  align-self: end;
  margin: 0 0 13px 2px;
  color: #111;
  font-size: 15px;
  line-height: 18px;
}
.l-title {
  grid-area: 1 / 2;
  margin-bottom: 10px;
  padding-left: 4px;
  text-align: center;
  font-size: 14px;
}
.l-min {
  grid-area: 2 / 1;
}
.l-bar {
  grid-area: 2 / 2;
  height: 16px;
  margin-top: 1px;
  border-radius: 6px;
  background: linear-gradient(90deg, #d2eeff, #6cc0ec 28%, #0090d8 42%, #0078be 58%, #00416b 92%);
}
.l-max {
  grid-area: 2 / 3;
  padding-left: 8px;
}
.l-low {
  grid-area: 3 / 1 / 4 / 3;
  margin-top: 4px;
  color: #c3d3e4;
}
.l-high {
  grid-area: 3 / 3;
  margin-top: 4px;
  padding-left: 8px;
  color: #004173;
}
.rank {
  width: 100%;
  table-layout: fixed;
  border-collapse: collapse;
  white-space: nowrap;
}
.r-strip { width: 20px; }
.r-name { width: 254px; }
.r-group { width: 106px; }
.r-value { width: 88px; }
.rank th {
  height: 49px;
  padding: 0;
  font-size: 18px;
  color: #111;
}
.rank td {
  height: 32px;
  padding: 0;
  line-height: 28px;
}
.rank .name {
  padding-left: 11px;
}
.rank .grp {
  text-align: center;
}
.rank .val {
  padding-right: 8px;
  text-align: right;
}
.rank .bar-cell {
  padding-left: 18px;
}
.eu td:not(.strip) {
  background: #fff4c8;
}
.eu .name {
  background: linear-gradient(90deg, transparent 6px, #fff4c8 6px) !important;
}
.track {
  height: 18px;
  padding: 3px 0;
  background: #eff4fa;
}
.fill {
  height: 12px;
}
</style>
